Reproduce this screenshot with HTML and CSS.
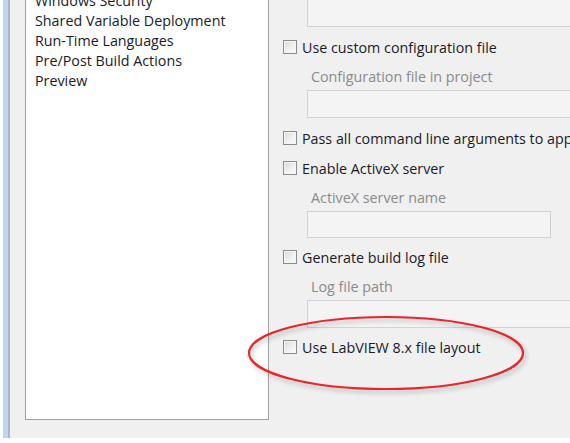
FILE: index.html
```html
<!DOCTYPE html>
<html>
<head>
<meta charset="utf-8">
<link rel="stylesheet" href="styles.css">
</head>
<body>
<div class="window">
  <div class="strip"></div>
  <div class="strip-edge"></div>
  <div class="main">
    <div class="listbox">
      <div class="list-items">
        <div class="item">Windows Security</div>
        <div class="item">Shared Variable Deployment</div>
        <div class="item">Run-Time Languages</div>
        <div class="item">Pre/Post Build Actions</div>
        <div class="item">Preview</div>
      </div>
    </div>
    <div class="panel">
      <div class="field field-top wide"></div>
      <label class="check-row r1"><span class="cb"></span>Use custom configuration file</label>
      <div class="sub-label">Configuration file in project</div>
      <div class="field wide f2"></div>
      <label class="check-row r2"><span class="cb"></span>Pass all command line arguments to application</label>
      <label class="check-row r3"><span class="cb"></span>Enable ActiveX server</label>
      <div class="sub-label">ActiveX server name</div>
      <div class="field short f3"></div>
      <label class="check-row r4"><span class="cb"></span>Generate build log file</label>
      <div class="sub-label">Log file path</div>
      <div class="field wide f4"></div>
      <label class="check-row r5"><span class="cb"></span>Use LabVIEW 8.x file layout</label>
    </div>
  </div>
</div>
<svg class="highlight" width="290" height="92" viewBox="0 0 290 92">
  <defs>
    <filter id="sh" x="-10%" y="-20%" width="120%" height="150%">
      <feGaussianBlur stdDeviation="2"/>
    </filter>
  </defs>
  <ellipse cx="139" cy="41" rx="137" ry="36" fill="none" stroke="rgba(0,0,0,0.18)" stroke-width="3" filter="url(#sh)" transform="translate(2,3)"/>
  <ellipse cx="139" cy="41" rx="137" ry="36" fill="none" stroke="#e8262b" stroke-width="2.2"/>
</svg>
</body>
</html>
```
FILE: styles.css
```css
html, body {
  margin: 0;
  padding: 0;
  background: #ffffff;
}
body {
  width: 570px;
  height: 443px;
  overflow: hidden;
  position: relative;
  font-family: "Open Sans", "Noto Sans", sans-serif;
  font-size: 14.3px;
  color: #1a1a28;
}
.window {
  display: flex;
  height: 438px;
  padding-left: 3px;
}
.strip {
  width: 5px;
  flex-shrink: 0;
  background: #bcd7f2;
}
.strip-edge {
  width: 2px;
  flex-shrink: 0;
  background: #a9b8c8;
}
.main {
  flex: 1;
  min-width: 0;
  display: flex;
  background: #f0f0f0;
  padding-left: 15px;
}
.listbox {
  width: 244px;
  height: 420px;
  box-sizing: border-box;
  background: #ffffff;
  border: 1px solid #a0a0a0;
  border-top: none;
  overflow: hidden;
  flex-shrink: 0;
}
.list-items {
  margin-top: -9px;
  padding-left: 9px;
}
.item {
  height: 20px;
  line-height: 20px;
  white-space: nowrap;
}
.panel {
  flex: 1;
  display: flex;
  flex-direction: column;
  padding-left: 14px;
  overflow: hidden;
  min-width: 0;
}
.field {
  box-sizing: border-box;
  background: #f4f4f4;
  border: 1px solid #d2d2d2;
  margin-left: 24px;
  flex-shrink: 0;
}
.field.wide {
  width: 300px;
}
.field.short {
  width: 244px;
}
.field-top {
  height: 27px;
  border-top: none;
}
.f2 { height: 28px; margin-top: 3px; }
.f3 { height: 27px; margin-top: 3px; }
.f4 { height: 28px; margin-top: 3px; }
.check-row {
  display: flex;
  align-items: center;
  height: 20px;
  margin-top: 10px;
  white-space: nowrap;
  flex-shrink: 0;
}
.r4, .r5 { margin-top: 9px; }
.cb {
  width: 12px;
  height: 12px;
  border: 1px solid #8a8b8b;
  background: linear-gradient(135deg, #d8d8d8 0%, #f2f2f2 60%, #fbfbfb 100%);
  box-shadow: inset 0 0 0 1px #f6f6f6;
  margin-right: 5px;
  flex-shrink: 0;
}
.sub-label {
  height: 20px;
  line-height: 20px;
  margin-top: 10px;
  margin-left: 28px;
  color: #8a8a8e;
  white-space: nowrap;
  flex-shrink: 0;
}
.highlight {
  position: absolute;
  left: 247px;
  top: 312px;
}
```
